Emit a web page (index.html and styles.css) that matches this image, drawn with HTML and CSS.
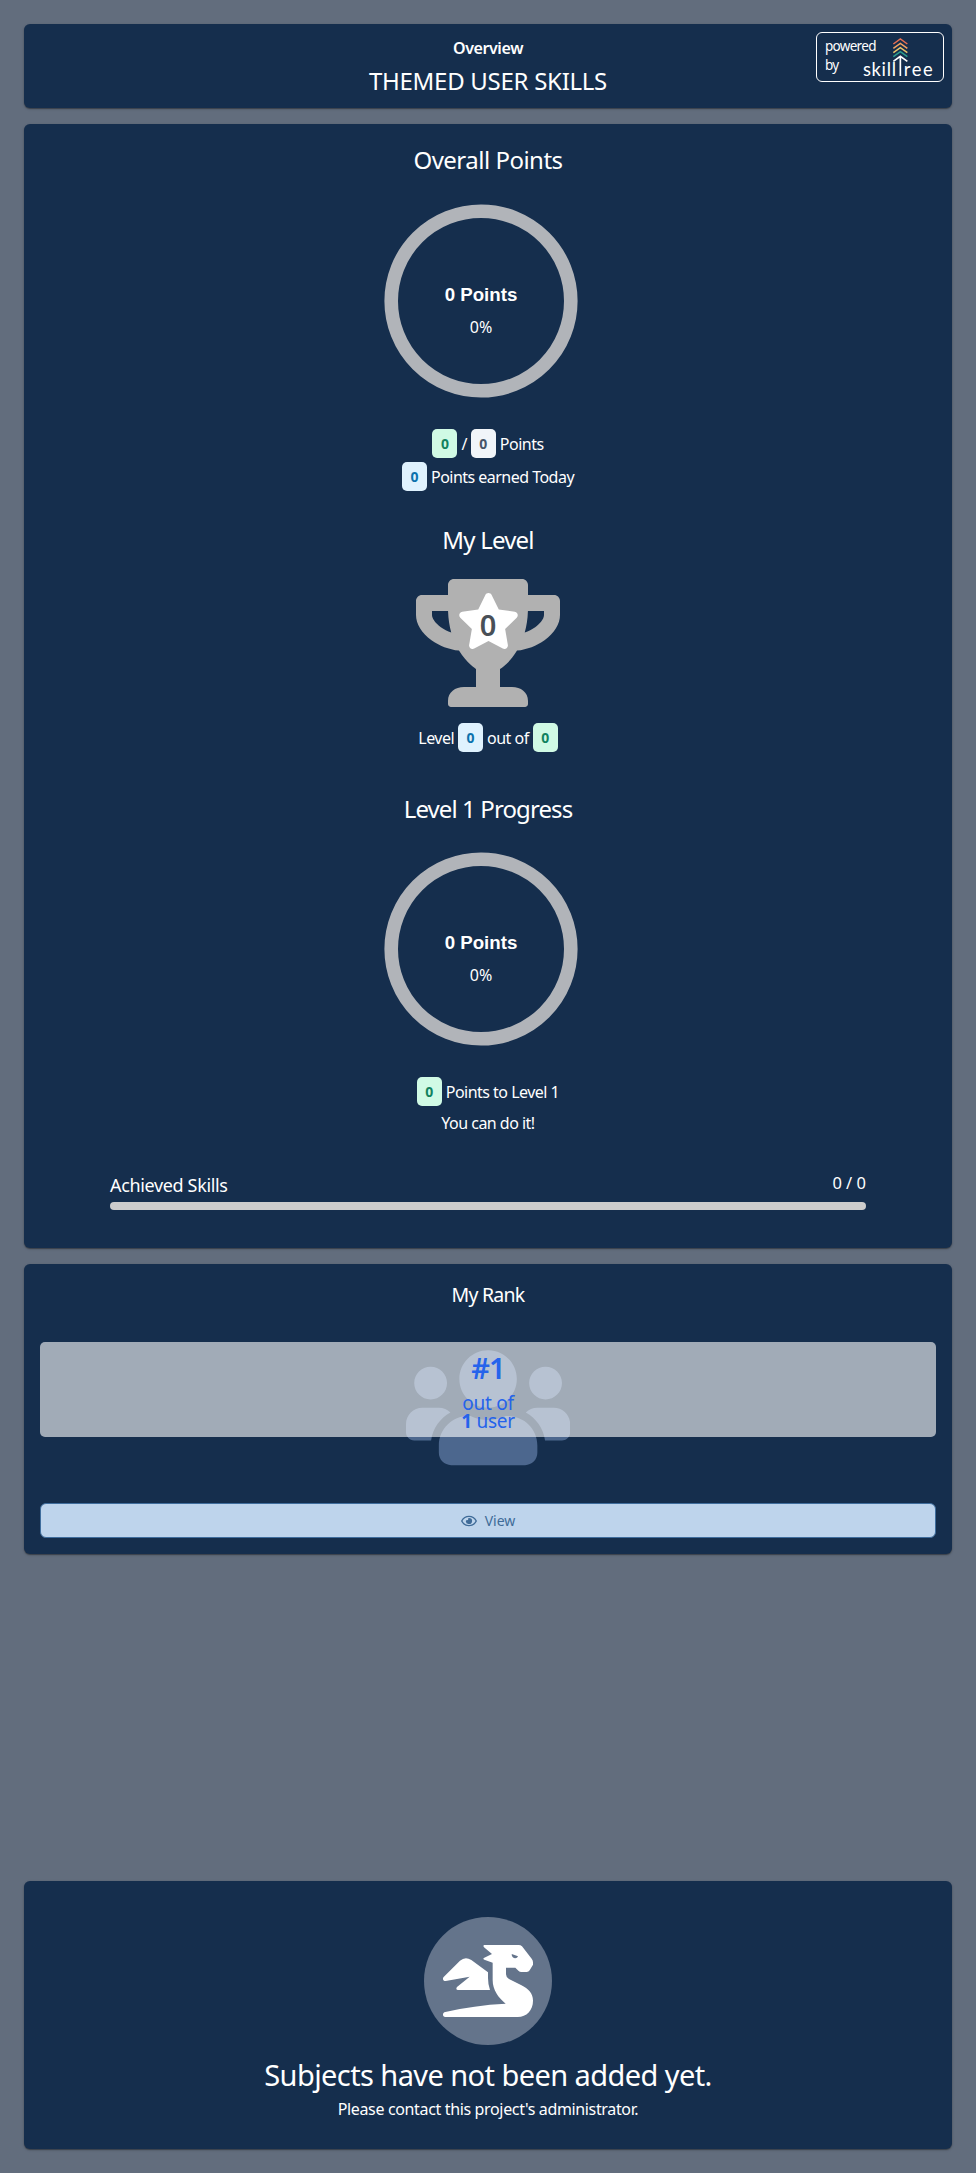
FILE: index.html
```html
<!DOCTYPE html>
<html lang="en">
<head>
<meta charset="utf-8">
<title>Themed User Skills</title>
<link rel="stylesheet" href="styles.css">
</head>
<body>
<main class="page">
  <header class="card header">
    <div class="crumb"><span>Overview</span></div>
    <h1 class="title"><span>THEMED USER SKILLS</span></h1>
    <div class="powered">
      <div class="powered-text"><span>powered</span><br><span>by</span></div>
      <svg class="logo" viewBox="245 110 215 125" fill="none">
        <g stroke-width="4.5">
          <path stroke="#e76f51" d="M339 131L360 116L381 131"/>
          <path stroke="#f4a261" d="M339 144L360 129L381 144"/>
          <path stroke="#e9c46a" d="M339 157L360 142L381 157"/>
          <path stroke="#2a9d8f" d="M339 169L360 154L381 169"/>
          <path stroke="#fff" stroke-width="5" d="M339 183L360 168L381 183M360 168V227"/>
        </g>
        <text class="logo-text" x="248" y="227" textLength="99">skill</text>
        <text class="logo-text" x="370" y="227" textLength="87">ree</text>
      </svg>
    </div>
  </header>

  <section class="card stats">
    <h2 class="heading"><span>Overall Points</span></h2>
    <svg class="ring" viewBox="0 0 194 194">
      <circle cx="97" cy="97" r="89.8"/>
      <text class="ring-points" x="97" y="97">0 Points</text>
      <text class="ring-percent" x="97" y="129">0%</text>
    </svg>
    <p class="line"><b class="badge green">0</b><span>/</span><b class="badge gray">0</b><span>Points</span></p>
    <p class="line second"><b class="badge blue">0</b><span>Points earned Today</span></p>

    <h2 class="heading level-heading"><span>My Level</span></h2>
    <div class="trophy">
      <svg viewBox="0 0 576 512"><path d="M552 64H448V24c0-13.300-10.700-24-24-24H152c-13.300 0-24 10.700-24 24v40H24C10.700 64 0 74.700 0 88v56c0 35.700 22.500 72.400 61.900 100.700 31.500 22.700 69.800 37.100 110 41.700C203.300 338.500 240 360 240 360v72h-48c-35.300 0-64 20.700-64 56v12c0 6.600 5.400 12 12 12h296c6.600 0 12-5.400 12-12v-12c0-35.300-28.700-56-64-56h-48v-72s36.700-21.500 68.100-73.600c40.300-4.600 78.600-19 110-41.700 39.300-28.300 61.900-65 61.900-100.700V88c0-13.300-10.700-24-24-24zM99.300 192.800C74.900 175.200 64 155.600 64 144v-16h64.200c1 32.600 5.800 61.200 12.800 86.200-15.100-5.200-29.200-12.400-41.700-21.400zM512 144c0 16.100-17.700 36.100-35.300 48.800-12.500 9-26.700 16.200-41.800 21.400 7-25 11.800-53.600 12.800-86.200H512v16z"/></svg>
      <svg class="star" viewBox="0 0 576 512"><path d="M259.300 17.800L194 150.200 47.900 171.500c-26.200 3.800-36.700 36.100-17.700 54.600l105.700 103-25 145.500c-4.500 26.300 23.200 46 46.400 33.700L288 439.600l130.700 68.700c23.200 12.200 50.900-7.400 46.400-33.700l-25-145.500 105.700-103c19-18.500 8.500-50.800-17.700-54.600L382 150.200 316.700 17.800c-11.700-23.600-45.600-23.900-57.400 0z"/></svg>
      <b class="level">0</b>
    </div>
    <p class="line level-line"><span>Level</span><b class="badge blue">0</b><span>out of</span><b class="badge green">0</b></p>

    <h2 class="heading progress-heading"><span>Level 1 Progress</span></h2>
    <svg class="ring" viewBox="0 0 194 194">
      <circle cx="97" cy="97" r="89.8"/>
      <text class="ring-points" x="97" y="97">0 Points</text>
      <text class="ring-percent" x="97" y="129">0%</text>
    </svg>
    <p class="line"><b class="badge green">0</b><span>Points to Level 1</span></p>
    <p class="line cheer"><span>You can do it!</span></p>

    <div class="achieved">
      <div class="achieved-row"><span class="achieved-label">Achieved Skills</span><span class="achieved-count">0 / 0</span></div>
      <div class="bar"></div>
    </div>
  </section>

  <section class="card rank">
    <h2 class="rank-title"><span>My Rank</span></h2>
    <div class="rank-area">
      <svg class="users" viewBox="0 0 640 512"><path d="M96 224c35.300 0 64-28.700 64-64s-28.700-64-64-64-64 28.700-64 64 28.700 64 64 64zm448 0c35.300 0 64-28.700 64-64s-28.700-64-64-64-64 28.700-64 64 28.700 64 64 64zm32 32h-64c-17.600 0-33.500 7.100-45.100 18.600 40.300 22.100 68.900 62 75.100 109.400h66c17.700 0 32-14.300 32-32v-32c0-35.300-28.700-64-64-64zm-256 0c61.900 0 112-50.100 112-112S381.900 32 320 32 208 82.100 208 144s50.100 112 112 112zm76.800 32h-8.300c-20.800 10-43.900 16-68.500 16s-47.600-6-68.500-16h-8.300C179.600 288 128 339.600 128 403.200V432c0 26.500 21.500 48 48 48h288c26.500 0 48-21.500 48-48v-28.800c0-63.600-51.600-115.200-115.200-115.200zm-223.700-13.400C161.500 263.100 145.600 256 128 256H64c-35.300 0-64 28.700-64 64v32c0 17.700 14.300 32 32 32h65.900c6.300-47.400 34.900-87.300 75.200-109.400z"/></svg>
      <div class="rank-box">
        <strong class="rank-number">#1</strong>
        <span class="rank-text">out of</span>
        <span class="rank-text"><b>1</b> user</span>
      </div>
    </div>
    <button class="view">
      <svg viewBox="0 0 576 512"><path d="M288 144a110.940 110.940 0 0 0-31.240 5 55.400 55.400 0 0 1 7.240 27 56 56 0 0 1-56 56 55.400 55.400 0 0 1-27-7.240A111.710 111.710 0 1 0 288 144zm284.520 97.400C518.290 135.590 410.930 64 288 64S57.680 135.640 3.480 241.410a32.350 32.350 0 0 0 0 29.190C57.710 376.410 165.070 448 288 448s230.320-71.640 284.520-177.410a32.350 32.350 0 0 0 0-29.190zM288 400c-98.650 0-189.090-55-237.930-144C98.910 167 189.340 112 288 112s189.090 55 237.930 144C477.100 345 386.660 400 288 400z"/></svg>
      <span>View</span>
    </button>
  </section>

  <section class="card empty">
    <svg class="dragon" viewBox="12 21 384 384">
      <circle cx="204" cy="213" r="192" fill="#64748b"/>
      <path fill="#fff" d="M194 105H296Q302 105 306 109L335 146Q339 151 339 157V164L329 181Q326 186 320 186H304Q299 186 296 183L286 173H258V193Q258 202 267 207L303 225C326 237 339 250 339 272C339 300 320 321 293 321H76C67 321 66 307 76 306C133 293 193 284 257 281C235 263 218 240 218 210V158L193 149C189 148 189 145 193 143L216 132L192 112C189 109 190 105 194 105Z"/>
      <path fill="#fff" d="M71 201L120 152Q136 138 154 150L204 187V204Q204 224 210 240H114C108 240 108 234 111 231L149 200L77 213C69 214 67 206 71 201Z"/>
      <path fill="#64748b" d="M275 132L294 139C291 148 275 147 275 132Z"/>
    </svg>
    <h2 class="empty-title"><span>Subjects have not been added yet.</span></h2>
    <p class="empty-text"><span>Please contact this project's administrator.</span></p>
  </section>
</main>
</body>
</html>
```
FILE: styles.css
```css
* { box-sizing: border-box; }
body { margin: 0; background: #626d7d; color: #fff; font: 16px/24px "Noto Sans", sans-serif; }
h1, h2, p { margin: 0; font-weight: 400; }
.page { display: flex; flex-direction: column; padding: 24px; height: 2173px; }
.card { position: relative; background: #152e4d; border-radius: 6px; text-align: center; box-shadow: 0 1px 3px rgba(0,0,0,.2), 0 1px 1px rgba(0,0,0,.3); flex: none; }

.header { height: 84px; margin-bottom: 16px; padding-top: 12px; }
.crumb { font-size: 16px; font-weight: 600; line-height: 24px; letter-spacing: -.4px; }
.title { font-size: 24px; line-height: 41px; letter-spacing: -.28px; }
.powered { position: absolute; top: 8px; right: 8px; width: 128px; height: 50px; border: 1px solid #fff; border-radius: 6px; display: flex; text-align: left; padding: 4px 0 0 8px; }
.powered-text { width: 37.700px; flex: none; font-size: 13.500px; line-height: 19px; letter-spacing: -.7px; white-space: nowrap; }
.logo { width: 71.700px; height: 41.700px; flex: none; margin: -.3px 0 0 -1px; }
.logo-text { font: 400 55px Lato, sans-serif; fill: #fff; }

.stats { height: 1124px; margin-bottom: 16px; display: flex; flex-direction: column; align-items: center; padding-top: 18px; }
.heading { font-size: 24px; line-height: 36px; letter-spacing: -.5px; }
.ring { width: 194px; height: 194px; margin: 26px 15px 31px 0; flex: none; }
.ring circle { fill: none; stroke: #b1b4b9; stroke-width: 13.600px; }
.ring text { fill: #fff; text-anchor: middle; }
.ring-points { font: bold 18.700px "Liberation Sans", sans-serif; }
.ring-percent { font-size: 16px; }
.line { display: flex; gap: 4px; align-items: center; height: 29px; letter-spacing: -.52px; white-space: nowrap; }
.second { margin-top: 4px; }
.badge { width: 25px; height: 29px; border-radius: 5px; font-size: 14px; line-height: 30px; text-align: center; letter-spacing: 0; }
.green { background: #d0fae5; color: #12825f; }
.gray { background: #f1f5f9; color: #475569; }
.blue { background: #dff2fe; color: #0c72ac; }
.level-heading { margin-top: 31px; letter-spacing: -.8px; }
.trophy { position: relative; width: 144px; height: 128px; margin-top: 21px; flex: none; }
.trophy svg { display: block; width: 144px; height: 128px; fill: #b1b1b1; }
.trophy .star { position: absolute; left: 41px; top: 14px; width: 63px; height: 56px; fill: #fff; }
.level { position: absolute; left: 0; top: 26px; width: 144px; font-size: 29px; font-weight: 600; line-height: 40px; color: #495057; }
.level-line { margin-top: 16px; }
.progress-heading { margin-top: 39px; letter-spacing: -.9px; }
.progress-heading + .ring { margin-top: 25px; }
.cheer { margin-top: 2px; }
.achieved { width: 756px; margin-top: 34px; }
.achieved-row { display: flex; justify-content: space-between; height: 31px; }
.achieved-label { font-size: 18px; line-height: 28px; letter-spacing: -.35px; }
.achieved-count { font-size: 16.500px; line-height: 24px; }
.bar { height: 8px; border-radius: 4px; background: #cdcdcd; }

.rank { height: 290px; padding: 16px; }
.rank-title { font-size: 19.500px; line-height: 30px; letter-spacing: -.75px; }
.rank-area { position: relative; height: 161px; margin-top: 32px; }
.users { position: absolute; left: 366px; top: -.5px; width: 164.200px; height: 131.400px; fill: #a6c5f7; opacity: .38; }
.rank-box { position: relative; height: 95px; border-radius: 5px; background: rgba(255,255,255,.6); color: #2563eb; padding-top: 6px; display: flex; flex-direction: column; align-items: center; }
.rank-number { font-size: 29px; line-height: 40px; font-weight: 600; letter-spacing: -1px; }
.rank-text { font-size: 19px; line-height: 18px; letter-spacing: -.3px; }
.rank-text:nth-child(2) { margin-top: 6px; }
.view { display: flex; align-items: center; justify-content: center; gap: 8px; width: 100%; height: 35px; border: 1px solid #3f6d9d; border-radius: 6px; background: #bed4ec; color: #3f6b98; font: 14px/20px "Noto Sans", sans-serif; padding: 0; }
.view svg { width: 16px; height: 14px; fill: currentColor; }

.empty { height: 268px; margin-top: auto; padding-top: 36px; }
.dragon { display: block; width: 128px; height: 128px; margin: 0 auto; }
.empty-title { font-size: 29px; line-height: 40px; margin-top: 10px; letter-spacing: -.58px; }
.empty-text { line-height: 24px; margin-top: 2px; letter-spacing: -.35px; }
```
